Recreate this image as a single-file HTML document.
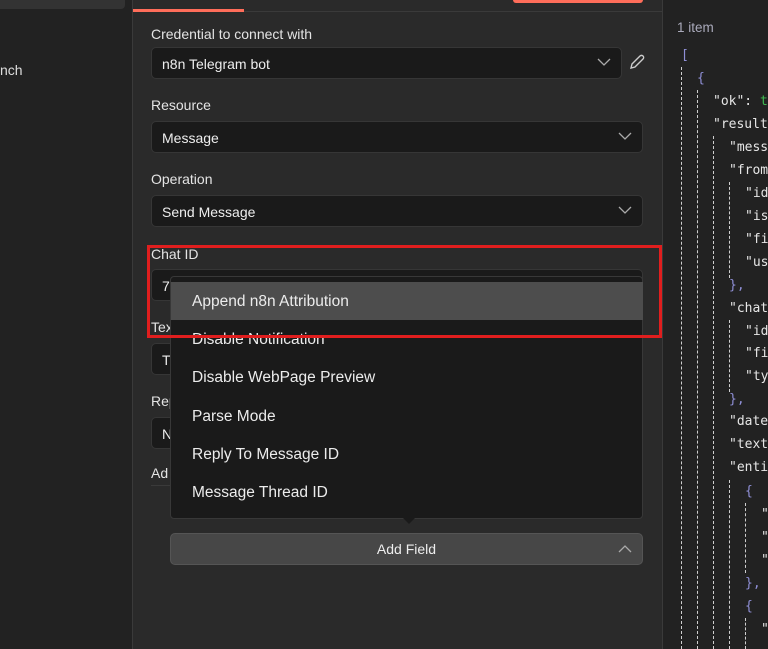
<!DOCTYPE html>
<html><head><meta charset="utf-8"><style>
*{margin:0;padding:0;box-sizing:border-box}
body{width:768px;height:649px;overflow:hidden;background:#222;font-family:"Liberation Sans",sans-serif;position:relative}
.a{position:absolute}
.lbl{position:absolute;left:151px;color:#e4e4e4;font-size:14px}
.inp{position:absolute;left:151px;width:492px;height:32px;background:#1a1a1a;border:1px solid #363636;border-radius:5px;color:#eee;font-size:14px;padding:8px 10px}
.chev{position:absolute;right:10px;top:9px;width:14px;height:10px}
.it{position:absolute;left:192px;color:#ececec;font-size:15.5px}
.m{position:absolute;font-family:"DejaVu Sans Mono","Liberation Mono",monospace;font-size:13px;color:#e6e6e6;white-space:pre}
.p{color:#8f8fd6}
.d{position:absolute;width:0;border-left:1px dashed #cfcfcf}
</style></head><body>
<div class="a" style="left:0;top:0;width:125px;height:9px;background:#333;border-radius:0 0 4px 0"></div>
<div class="a" style="left:0;top:62px;color:#ddd;font-size:14px">nch</div>
<div class="a" style="left:132px;top:0;width:531px;height:649px;background:#2a2a2a;border-left:1px solid #3a3a3a;border-right:1px solid #3a3a3a"></div>
<div class="a" style="left:133px;top:11px;width:529px;height:1px;background:#3a3a3a"></div>
<div class="a" style="left:133px;top:9px;width:111px;height:3px;background:#ff6d5a"></div>
<div class="a" style="left:513px;top:0;width:130px;height:3px;background:#ff6d5a;border-radius:0 0 4px 4px"></div>

<div class="lbl" style="top:26px">Credential to connect with</div>
<div class="inp" style="top:47px;width:471px">n8n Telegram bot<svg class="chev" viewBox="0 0 14 10"><path d="M1 2l6 6 6-6" stroke="#aaa" fill="none" stroke-width="1.3"/></svg></div>
<svg class="a" style="left:628px;top:54px" width="17" height="17" viewBox="0 0 17 17"><path d="M3 14l1-4 8-8a2 2 0 013 3l-8 8z" stroke="#ccc" fill="none" stroke-width="1.4"/></svg>
<div class="lbl" style="top:97px">Resource</div>
<div class="inp" style="top:121px">Message<svg class="chev" viewBox="0 0 14 10"><path d="M1 2l6 6 6-6" stroke="#aaa" fill="none" stroke-width="1.3"/></svg></div>
<div class="lbl" style="top:171px">Operation</div>
<div class="inp" style="top:195px">Send Message<svg class="chev" viewBox="0 0 14 10"><path d="M1 2l6 6 6-6" stroke="#aaa" fill="none" stroke-width="1.3"/></svg></div>
<div class="lbl" style="top:246px">Chat ID</div>
<div class="inp" style="top:269px">7</div>
<div class="lbl" style="top:319px">Text</div>
<div class="inp" style="top:343px">T</div>
<div class="lbl" style="top:393px">Reply</div>
<div class="inp" style="top:417px">N</div>
<div class="lbl" style="top:465px">Ad</div>
<div class="a" style="left:151px;top:485px;width:492px;height:1px;background:#3a3a3a"></div>

<div class="a" style="left:170px;top:276px;width:473px;height:243px;background:#1a1a1a;border:1px solid #383838;border-radius:4px"></div>
<div class="a" style="left:171px;top:282px;width:472px;height:38px;background:#4d4d4d"></div>
<div class="it" style="top:293px">Append n8n Attribution</div>
<div class="it" style="top:331px">Disable Notification</div>
<div class="it" style="top:369px">Disable WebPage Preview</div>
<div class="it" style="top:408px">Parse Mode</div>
<div class="it" style="top:446px">Reply To Message ID</div>
<div class="it" style="top:484px">Message Thread ID</div>
<div class="a" style="left:403px;top:518px;width:0;height:0;border-left:6px solid transparent;border-right:6px solid transparent;border-top:6px solid #1a1a1a"></div>
<div class="a" style="left:170px;top:533px;width:473px;height:32px;background:#474747;border:1px solid #555;border-radius:5px;color:#eee;font-size:14px;text-align:center;line-height:30px">Add Field<svg class="chev" style="top:10px" viewBox="0 0 14 10"><path d="M1 8l6-6 6 6" stroke="#aaa" fill="none" stroke-width="1.3"/></svg></div>

<div class="a" style="left:147px;top:245px;width:515px;height:93px;border:3px solid #e01e1e"></div>

<div class="a" style="left:677px;top:20px;color:#aab;font-size:13.5px">1 item</div>
<div class="d" style="left:681px;top:67px;height:582px"></div>
<div class="d" style="left:697px;top:90px;height:559px"></div>
<div class="d" style="left:713px;top:136px;height:513px"></div>
<div class="d" style="left:729px;top:182px;height:96px"></div>
<div class="d" style="left:729px;top:320px;height:72px"></div>
<div class="d" style="left:729px;top:480px;height:169px"></div>
<div class="d" style="left:745px;top:503px;height:70px"></div>
<div class="d" style="left:745px;top:618px;height:31px"></div>
<div class="m p" style="left:681px;top:48px">[</div>
<div class="m p" style="left:697px;top:71px">{</div>
<div class="m" style="left:713px;top:94px">"ok": <span style="color:#3fb950">t</span></div>
<div class="m" style="left:713px;top:117px">"result"</div>
<div class="m" style="left:729px;top:140px">"messa</div>
<div class="m" style="left:729px;top:163px">"from"</div>
<div class="m" style="left:745px;top:186px">"id</div>
<div class="m" style="left:745px;top:209px">"is</div>
<div class="m" style="left:745px;top:232px">"fi</div>
<div class="m" style="left:745px;top:255px">"us</div>
<div class="m p" style="left:729px;top:278px">},</div>
<div class="m" style="left:729px;top:301px">"chat"</div>
<div class="m" style="left:745px;top:324px">"id</div>
<div class="m" style="left:745px;top:346px">"fi</div>
<div class="m" style="left:745px;top:369px">"ty</div>
<div class="m p" style="left:729px;top:392px">},</div>
<div class="m" style="left:729px;top:414px">"date"</div>
<div class="m" style="left:729px;top:437px">"text"</div>
<div class="m" style="left:729px;top:460px">"entit</div>
<div class="m p" style="left:745px;top:484px">{</div>
<div class="m" style="left:761px;top:507px">"</div>
<div class="m" style="left:761px;top:530px">"</div>
<div class="m" style="left:761px;top:553px">"</div>
<div class="m p" style="left:745px;top:576px">},</div>
<div class="m p" style="left:745px;top:599px">{</div>
<div class="m" style="left:761px;top:622px">"</div>
</body></html>
